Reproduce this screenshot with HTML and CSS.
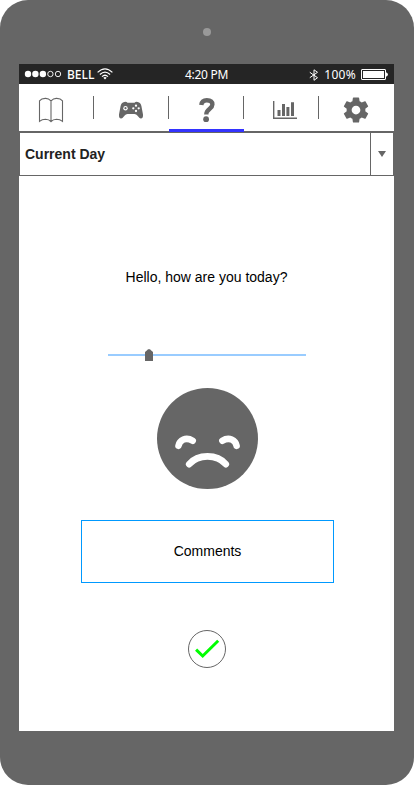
FILE: index.html
```html
<!DOCTYPE html>
<html lang="en">
<head>
<meta charset="utf-8">
<title>Current Day</title>
<link rel="stylesheet" href="styles.css">
</head>
<body>
<div class="phone">
  <div class="bezel"><span class="camera"></span></div>
  <div class="screen">
    <header class="status">
      <div class="carrier">
        <svg class="signal" width="40" height="18" viewBox="0 2 40 18"><g fill="#fff"><circle cx="5" cy="10" r="3.2"/><circle cx="12.4" cy="10" r="3.2"/><circle cx="19.9" cy="10" r="3.2"/></g><g fill="none" stroke="#fff" stroke-width=".9"><circle cx="27.4" cy="10" r="2.7"/><circle cx="35" cy="10" r="2.7"/></g></svg>
        <span class="name">BELL</span>
        <svg class="wifi" width="16" height="12" viewBox="0 0 16 12"><g fill="none" stroke="#fff" stroke-width="1.2"><path d="M.6 4.4Q8-2.8 15.4 4.4M2.9 6.5Q8 1.6 13.1 6.5M5 8.6Q8 5.9 11 8.6"/></g><path fill="#fff" d="M6.3 9.7Q8 8.3 9.7 9.7L8 11.4z"/></svg>
      </div>
      <span class="time">4:20 PM</span>
      <div class="power">
        <svg width="10" height="12" viewBox="0 0 10 12"><path d="M.8 3.3 8.5 8.7 5 11.3V.8L8.5 3.3.8 8.7" fill="none" stroke="#fff" stroke-width="1"/></svg>
        <span class="level">100%</span>
        <svg width="28" height="12" viewBox="0 0 28 12"><rect x=".5" y=".5" width="24" height="10" rx=".5" fill="none" stroke="#fff"/><path fill="#fff" d="M2 2h21v7H2zM25 3.2q2 .8 2 2.3t-2 2.3z"/></svg>
      </div>
    </header>
    <nav class="tabs">
      <a class="tab"><svg width="26" height="26" viewBox="38 97 26 26"><path fill="none" stroke="#666" stroke-width="1.1" d="M51 100.8V121.5M51 100.8Q48.5 98.3 45.5 98.4Q41.5 98.3 39.5 100.8V121.3Q42 119.2 45.5 119.2Q49 119.3 51 121.6Q53 119.3 56.5 119.2Q60 119.2 62.5 121.3V100.8Q60.5 98.3 56.5 98.4Q53.5 98.3 51 100.8"/></svg></a>
      <a class="tab"><svg width="26" height="26" viewBox="118 97 26 26"><path fill="#666" d="M124.3 102Q126.3 101.3 127.5 102.8H134.5Q135.7 101.3 137.7 102Q140.7 102.5 141.4 106L143 114.5Q143.3 118.5 140.8 118.4Q139.3 118.3 137.3 115.5Q136.3 114 134.5 114H127.5Q125.7 114 124.7 115.5Q122.7 118.3 121.2 118.4Q118.7 118.5 119 114.5L120.6 106Q121.3 102.5 124.3 102z"/><g fill="#fff"><circle cx="125.5" cy="108.2" r="2.2"/><circle cx="136" cy="105.7" r="1.15"/><circle cx="136" cy="111" r="1.15"/><circle cx="133.3" cy="108.3" r="1.15"/><circle cx="138.7" cy="108.3" r="1.15"/></g><circle cx="125.5" cy="108.2" r="1.1" fill="#666"/></svg></a>
      <a class="tab active"><svg width="26" height="26" viewBox="194 97 26 26"><path fill="none" stroke="#666" stroke-width="4.4" d="M201.3 105C201.7 101.6 203.6 100.2 206.8 100.2C210.3 100.2 212.4 101.8 212.4 104.6C212.4 109 206.3 108.6 206.3 114.6"/><circle cx="206.1" cy="119.2" r="2.9" fill="#666"/></svg></a>
      <a class="tab"><svg width="26" height="26" viewBox="272 97 26 26"><path fill="#666" d="M273 101h1.4v16.5H297v1.4H273zM277.5 110h3v6h-3zM282 104h3v12h-3zM286.4 107h3v9h-3zM291 102.3h3V116h-3z"/></svg></a>
      <a class="tab"><svg width="30" height="30" viewBox="0 0 24 24"><path fill="#666" d="M19.43 12.98c.04-.32.07-.64.07-.98s-.03-.66-.07-.98l2.11-1.65c.19-.15.24-.42.12-.64l-2-3.46c-.12-.22-.39-.3-.61-.22l-2.49 1c-.52-.4-1.08-.73-1.69-.98l-.38-2.65C14.46 2.18 14.25 2 14 2h-4c-.25 0-.46.18-.49.42l-.38 2.65c-.61.25-1.17.59-1.69.98l-2.49-1c-.23-.09-.49 0-.61.22l-2 3.46c-.13.22-.07.49.12.64l2.11 1.65c-.04.32-.07.65-.07.98s.03.66.07.98l-2.11 1.65c-.19.15-.24.42-.12.64l2 3.46c.12.22.39.3.61.22l2.49-1c.52.4 1.08.73 1.69.98l.38 2.65c.03.24.24.42.49.42h4c.25 0 .46-.18.49-.42l.38-2.65c.61-.25 1.17-.59 1.69-.98l2.49 1c.23.09.49 0 .61-.22l2-3.46c.12-.22.07-.49-.12-.64l-2.11-1.65zM12 15.5c-1.93 0-3.5-1.57-3.5-3.5s1.57-3.5 3.5-3.5 3.5 1.57 3.5 3.5-1.57 3.5-3.5 3.5z"/></svg></a>
    </nav>
    <div class="select">
      <span class="value">Current Day</span>
      <span class="toggle"><span class="arrow"></span></span>
    </div>
    <main class="content">
      <p class="question">Hello, how are you today?</p>
      <div class="slider"><svg class="thumb" width="8" height="12" viewBox="0 0 8 12"><path fill="#666" d="M0 12V3L3 .4Q4-.3 5 .4L8 3V12z"/></svg></div>
      <svg class="face" width="101" height="101" viewBox="157 388 101 101"><circle cx="207.5" cy="438.5" r="50.5" fill="#666"/><g fill="none" stroke="#fff" stroke-width="6.6" stroke-linecap="round"><path d="M178.5 445.8C179.5 440 186 436.6 192.7 440.8M236.6 445.8C235.6 440 229 436.6 222.4 440.8M189.2 464.2C198 453.8 217 453.8 225.8 464.2"/></g></svg>
      <div class="comments">Comments</div>
      <svg class="confirm" width="38" height="38" viewBox="0 0 38 38"><circle cx="19" cy="19" r="18.5" fill="#fff" stroke="#666"/><path d="M8.1 19.6 14.7 26 30.2 10.8" fill="none" stroke="#0f0" stroke-width="3"/></svg>
    </main>
  </div>
</div>
</body>
</html>
```
FILE: styles.css
```css
* { box-sizing: border-box; }
body {
  margin: 0;
  background: #fff;
  font: 14px/16px "Liberation Sans", Arial, sans-serif;
  color: #000;
}
svg { display: block; flex: none; }
.phone {
  width: 414px;
  height: 785px;
  padding: 0 20px 0 19px;
  background: #666;
  border-radius: 28px;
}
.bezel {
  height: 64px;
  display: flex;
  justify-content: center;
  align-items: center;
}
.camera {
  width: 8px;
  height: 8px;
  border-radius: 50%;
  background: #999;
}
.screen { width: 375px; height: 667px; background: #fff; }
.status {
  height: 20px;
  display: grid;
  grid-template-columns: 1fr auto 1fr;
  align-items: center;
  padding: 2px 5px 0 4px;
  background: #252525;
  color: #fff;
  font: 12px/18px "Noto Sans", "Open Sans", sans-serif;
}
.carrier, .power { display: flex; align-items: center; }
.name { width: 26px; margin-left: 4px; font-weight: 500; }
.time { letter-spacing: -.3px; padding-left: 1px; }
.level { letter-spacing: .3px; }
.wifi { margin: -2px 0 0 4px; }
.power { justify-content: flex-end; gap: 5px; }
.tabs { height: 49px; display: flex; border-bottom: 2px solid #666; }
.tab {
  position: relative;
  flex: 0 0 75px;
  height: 47px;
  display: flex;
  align-items: center;
  justify-content: center;
  padding: 5px 11px 0 0;
}
.tab:nth-child(2) { padding-right: 1px; }
.tab:nth-child(3) { padding: 5px 0 0 1px; }
.tab:nth-child(4) { padding: 5px 0 0 7px; }
.tab:nth-child(5) { padding-right: 1px; }
.tab:not(:last-child)::before {
  content: "";
  position: absolute;
  right: 0;
  top: 12px;
  width: 1px;
  height: 23px;
  background: #666;
}
.active::after {
  content: "";
  position: absolute;
  left: 0;
  bottom: -1px;
  width: 75px;
  height: 3px;
  background: #33f;
}
.select {
  height: 43px;
  display: flex;
  align-items: center;
  border: 1px solid #666;
  border-top: 0;
}
.value { flex: 1; padding-left: 5px; font-weight: bold; color: #222; }
.toggle {
  width: 23px;
  height: 42px;
  display: flex;
  align-items: center;
  justify-content: center;
  border-left: 1px solid #666;
}
.arrow {
  border: 4px solid transparent;
  border-top: 6px solid #666;
  border-bottom: 0;
}
.content {
  display: flex;
  flex-direction: column;
  align-items: center;
  padding-top: 93px;
}
.question { margin: 0; }
.slider {
  width: 198px;
  height: 12px;
  margin-top: 64px;
  padding-left: 37px;
  background: linear-gradient(#9cf, #9cf) 0 5px / 100% 2px no-repeat;
}
.face { margin: 27px 0 0 2px; }
.comments {
  width: 253px;
  height: 63px;
  margin: 31px 0 0 2px;
  padding-bottom: 2px;
  display: flex;
  align-items: center;
  justify-content: center;
  border: 1px solid #09f;
}
.confirm { margin: 47px 0 0 1px; }
```
